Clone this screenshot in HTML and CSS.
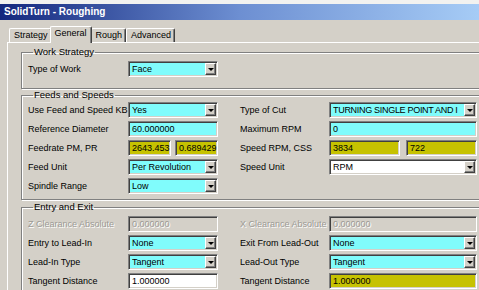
FILE: index.html
```html
<!DOCTYPE html>
<html lang="en">
<head>
    <meta charset="UTF-8">
    <title>SolidTurn - Roughing</title>
    <link rel="stylesheet" href="styles.css">
</head>
<body>
    <div class="window">
        <div class="titlebar">SolidTurn - Roughing</div>
        <div class="tabs">
            <span class="tab">Strategy</span>
            <span class="tab active">General</span>
            <span class="tab">Rough</span>
            <span class="tab">Advanced</span>
        </div>
        <div class="page">
            <fieldset class="group work">
                <legend>Work Strategy</legend>
                <div class="rows">
                    <label>Type of Work</label>
                    <div class="combo cyan"><span class="val">Face</span><span class="drop"></span></div>
                </div>
            </fieldset>

            <fieldset class="group feeds">
                <legend>Feeds and Speeds</legend>
                <div class="rows">
                    <label>Use Feed and Speed KB</label>
                    <div class="combo cyan"><span class="val">Yes</span><span class="drop"></span></div>
                    <label>Type of Cut</label>
                    <div class="combo cyan"><span class="val tight">TURNING SINGLE POINT AND I</span><span class="drop"></span></div>

                    <label>Reference Diameter</label>
                    <div class="field cyan">60.000000</div>
                    <label>Maximum RPM</label>
                    <div class="field cyan">0</div>

                    <label>Feedrate PM, PR</label>
                    <div class="pair">
                        <div class="field olive">2643.453</div>
                        <div class="field olive">0.689429</div>
                    </div>
                    <label>Speed RPM, CSS</label>
                    <div class="pair wide">
                        <div class="field olive">3834</div>
                        <div class="field olive">722</div>
                    </div>

                    <label>Feed Unit</label>
                    <div class="combo cyan"><span class="val">Per Revolution</span><span class="drop"></span></div>
                    <label>Speed Unit</label>
                    <div class="combo white"><span class="val">RPM</span><span class="drop"></span></div>

                    <label>Spindle Range</label>
                    <div class="combo cyan"><span class="val">Low</span><span class="drop"></span></div>
                </div>
            </fieldset>

            <fieldset class="group entry">
                <legend>Entry and Exit</legend>
                <div class="rows">
                    <label class="off">Z Clearance Absolute</label>
                    <div class="field disabled">0.000000</div>
                    <label class="off">X Clearance Absolute</label>
                    <div class="field disabled">0.000000</div>

                    <label>Entry to Lead-In</label>
                    <div class="combo cyan"><span class="val">None</span><span class="drop"></span></div>
                    <label>Exit From Lead-Out</label>
                    <div class="combo cyan"><span class="val">None</span><span class="drop"></span></div>

                    <label>Lead-In Type</label>
                    <div class="combo cyan"><span class="val">Tangent</span><span class="drop"></span></div>
                    <label>Lead-Out Type</label>
                    <div class="combo cyan"><span class="val">Tangent</span><span class="drop"></span></div>

                    <label>Tangent Distance</label>
                    <div class="field white">1.000000</div>
                    <label>Tangent Distance</label>
                    <div class="field olive">1.000000</div>
                </div>
            </fieldset>
        </div>
    </div>
</body>
</html>
```

FILE: styles.css
```css
* {
    margin: 0;
    padding: 0;
    box-sizing: border-box;
}

html, body {
    overflow: hidden;
}

body {
    background: #f2f2f0;
    font-family: "Liberation Sans", Arial, sans-serif;
    font-size: 9px;
    color: #000;
}

.window {
    width: 540px;
    height: 300px;
    margin-top: 4px;
    background: #d4d0c8;
}

.titlebar {
    height: 16px;
    padding-left: 4px;
    line-height: 16px;
    font-size: 10px;
    font-weight: bold;
    color: #fff;
    background: linear-gradient(to right, #14287e 0, #6d8fd2 240px, #a6ccf6 479px);
}

/* tab strip */
.tabs {
    display: flex;
    align-items: flex-end;
    height: 22px;
    padding-left: 9px;
}

.tab {
    height: 14px;
    line-height: 12px;
    padding: 0 3px 0 4px;
    border-top: 1px solid #fff;
    border-left: 1px solid #fff;
    border-right: 1px solid #404040;
    box-shadow: inset -1px 0 #808080;
    border-radius: 2px 2px 0 0;
}

.tab.active {
    height: 17px;
    margin: 0 -1px -1px -2px;
    padding: 0 4px;
    line-height: 13px;
    background: #d4d0c8;
    position: relative;
    z-index: 1;
}

.page {
    margin-left: 7px;
    padding-left: 13px;
    border-top: 1px solid #fff;
    border-left: 1px solid #fff;
}

/* group boxes */
.group {
    border: 1px solid #808080;
    box-shadow: inset 1px 1px #fff, 1px 1px #fff;
    padding: 0 0 0 6px;
}

.group legend {
    margin-left: 5px;
    padding: 0 1px;
    line-height: 10px;
    font-size: 9.5px;
}

.work {
    margin-top: 4px;
    padding-top: 4px;
    padding-bottom: 11px;
}

.feeds {
    margin-top: 1px;
    padding-top: 2px;
    padding-bottom: 5px;
}

.entry {
    margin-top: 2px;
    padding-top: 4px;
    padding-bottom: 10px;
}

.rows {
    display: grid;
    grid-template-columns: 100px 90px 111px 148px;
    row-gap: 3px;
}

.rows > :nth-child(4n+3) {
    margin-left: 22px;
}

label {
    height: 16px;
    line-height: 16px;
    white-space: nowrap;
}

label.off {
    color: #9c9a94;
    text-shadow: 1px 1px #fff;
}

/* inputs */
.field,
.combo {
    height: 16px;
    border: 1px solid;
    border-color: #808080 #fff #fff #808080;
    box-shadow: inset 1px 1px #404040, inset -1px -1px #d4d0c8;
    padding-left: 3px;
    line-height: 14px;
    white-space: nowrap;
    overflow: hidden;
}

.combo {
    display: flex;
    padding-right: 1px;
}

.combo .val {
    flex: 1;
    overflow: hidden;
}

.combo .tight {
    letter-spacing: -0.3px;
}

.drop {
    width: 11px;
    height: 12px;
    margin-top: 1px;
    background: #d4d0c8;
    border: 1px solid;
    border-color: #fff #404040 #404040 #fff;
    box-shadow: inset -1px -1px #808080;
    display: flex;
    justify-content: center;
    align-items: center;
}

.drop::after {
    content: "";
    border-left: 3px solid transparent;
    border-right: 3px solid transparent;
    border-top: 3px solid #000;
}

.cyan {
    background: #80fcfc;
}

.olive {
    background: #c6c200;
}

.white {
    background: #fff;
}

.disabled {
    background: #d4d0c8;
    color: #9c9a94;
    text-shadow: 1px 1px #fff;
}

.pair {
    display: flex;
    gap: 4px;
}

.pair .field {
    flex: 1;
}

.pair.wide {
    gap: 6px;
}
```
